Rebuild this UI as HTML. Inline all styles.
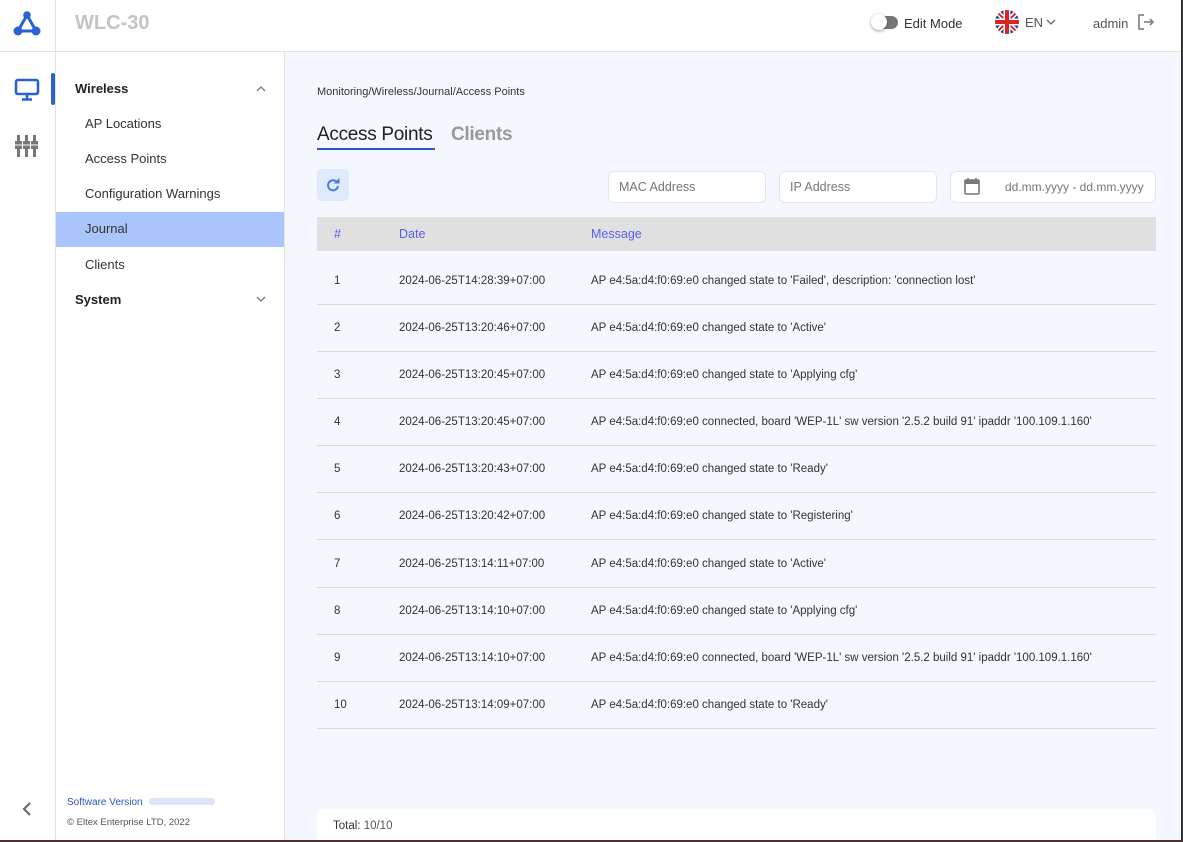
<!DOCTYPE html>
<html><head><meta charset="utf-8"><style>
*{box-sizing:border-box;margin:0;padding:0}
body{width:1183px;height:842px;overflow:hidden;font-family:"Liberation Sans",sans-serif;background:#f4f7fd;position:relative;color:#333}
.hdr{position:absolute;left:0;top:0;width:1183px;height:52px;background:#fff;border-bottom:1px solid #e2e2e2}
.rail{position:absolute;left:0;top:52px;width:56px;height:790px;background:#fff;border-right:1px solid #e2e2e2}
.side{position:absolute;left:56px;top:52px;width:229px;height:790px;background:#fff;border-right:1px solid #e2e2e2}
.abs{position:absolute}
.si{position:absolute;left:29px;font-size:13px;color:#333}
.rows div{position:absolute;height:47px;left:317px;width:839px;border-bottom:1px solid #dcdcdc;font-size:11.5px;color:#333}
.rows span{position:absolute;top:17px}
.inp{position:absolute;top:171px;height:32px;background:#fff;border:1px solid #e3e6ec;border-radius:6px;font-size:12.5px;color:#777;padding:8px 10px}
</style></head><body>
<div class="hdr">
 <svg class="abs" style="left:13px;top:11px" width="28" height="26" viewBox="0 0 28 26"><g stroke="#2a62d6" stroke-width="3" fill="none"><path d="M14 4L5 20M14 4L23 20M5 20H23"/></g><circle cx="14" cy="4" r="3.8" fill="#2a62d6"/><circle cx="5" cy="20" r="4.5" fill="#2a62d6"/><circle cx="23" cy="20" r="4.5" fill="#2a62d6"/></svg>
 <div class="abs" style="left:55px;top:0;width:1px;height:52px;background:#e2e2e2"></div>
 <div class="abs" style="left:75px;top:12px;font-size:20px;font-weight:bold;color:#c4c4c4">WLC-30</div>
 <div class="abs" style="left:872px;top:16px;width:26px;height:13px;border-radius:7px;background:#777"></div>
 <div class="abs" style="left:871px;top:14px;width:16px;height:16px;border-radius:50%;background:#fff;box-shadow:0 1px 3px rgba(0,0,0,.4)"></div>
 <div class="abs" style="left:904px;top:16px;font-size:13px;color:#333">Edit Mode</div>
 <svg class="abs" style="left:995px;top:10px" width="24" height="24" viewBox="0 0 24 24"><defs><clipPath id="c"><circle cx="12" cy="12" r="12"/></clipPath></defs><g clip-path="url(#c)"><rect width="24" height="24" fill="#1e3e8c"/><path d="M0 0L24 24M24 0L0 24" stroke="#fff" stroke-width="5"/><path d="M0 0L24 24M24 0L0 24" stroke="#d22" stroke-width="2"/><path d="M12 0V24M0 12H24" stroke="#fff" stroke-width="7"/><path d="M12 0V24M0 12H24" stroke="#d22" stroke-width="4"/></g></svg>
 <div class="abs" style="left:1025px;top:15px;font-size:13px;color:#555">EN</div>
 <svg class="abs" style="left:1046px;top:19px" width="10" height="7"><path d="M1 1L5 5L9 1" stroke="#666" stroke-width="1.3" fill="none"/></svg>
 <div class="abs" style="left:1093px;top:16px;font-size:13px;color:#555">admin</div>
 <svg class="abs" style="left:1137px;top:13px" width="18" height="18" viewBox="0 0 18 18"><path d="M7 2H2V16H7M7 9H16M13 6L16 9L13 12" stroke="#777" stroke-width="1.5" fill="none"/></svg>
</div>
<div class="rail">
 <div class="abs" style="left:51px;top:21px;width:4px;height:32px;border-radius:2px;background:#2a62d6"></div>
 <svg class="abs" style="left:14px;top:26px" width="26" height="24" viewBox="0 0 26 24"><rect x="2" y="2" width="22" height="14" rx="2" stroke="#2a62d6" stroke-width="2.6" fill="none"/><path d="M13 16V21M8 21.5H18" stroke="#2a62d6" stroke-width="2.6"/></svg>
 <svg class="abs" style="left:14px;top:81px" width="26" height="26" viewBox="0 0 26 26"><g fill="#777"><rect x="3" y="2" width="3" height="22"/><rect x="11" y="2" width="3" height="22"/><rect x="19" y="2" width="3" height="22"/><rect x="1" y="8" width="7" height="8"/><rect x="9" y="8" width="7" height="8"/><rect x="17" y="8" width="7" height="8"/></g><path d="M1 12H24" stroke="#fff" stroke-width="1"/></svg>
 <svg class="abs" style="left:22px;top:750px" width="10" height="14"><path d="M8 1L2 7L8 13" stroke="#666" stroke-width="2" fill="none"/></svg>
</div>
<div class="side">
 <div class="si" style="left:19px;top:29px;font-weight:bold;color:#222">Wireless</div>
 <svg class="abs" style="left:200px;top:33px" width="10" height="7"><path d="M1 6L5 2L9 6" stroke="#777" stroke-width="1.3" fill="none"/></svg>
 <div class="si" style="top:64px">AP Locations</div>
 <div class="si" style="top:99px">Access Points</div>
 <div class="si" style="top:134px">Configuration Warnings</div>
 <div class="abs" style="left:0;top:160px;width:228px;height:35px;background:#a9c5fb"></div>
 <div class="si" style="top:169px">Journal</div>
 <div class="si" style="top:205px">Clients</div>
 <div class="si" style="left:19px;top:240px;font-weight:bold;color:#222">System</div>
 <svg class="abs" style="left:200px;top:244px" width="10" height="7"><path d="M1 1L5 5L9 1" stroke="#777" stroke-width="1.3" fill="none"/></svg>
 <div class="abs" style="left:11px;top:745px;font-size:10px;color:#2a56b8">Software Version <span style="display:inline-block;width:66px;height:7px;background:#dde6f7;border-radius:3px;margin-left:4px"></span></div>
 <div class="abs" style="left:11px;top:765px;font-size:9.5px;color:#555">© Eltex Enterprise LTD, 2022</div>
</div>
<div class="abs" style="left:317px;top:86px;font-size:11px;color:#333">Monitoring/Wireless/Journal/Access Points</div>
<div class="abs" style="left:317px;top:124px;font-size:19px;color:#222;letter-spacing:-0.3px">Access Points</div>
<div class="abs" style="left:317px;top:148px;width:118px;height:2px;background:#2a56c8"></div>
<div class="abs" style="left:451px;top:124px;font-size:19px;color:#999;font-weight:bold;letter-spacing:-0.3px">Clients</div>
<div class="abs" style="left:317px;top:169px;width:32px;height:32px;border-radius:5px;background:#dfeafd"></div>
<svg class="abs" style="left:326px;top:178px" width="14" height="14" viewBox="0 0 14 14"><path d="M11.5 5A5 5 0 1 0 12 8" stroke="#4a7ed8" stroke-width="2" fill="none"/><path d="M9 5H13V1Z" fill="#4a7ed8" stroke="#4a7ed8"/></svg>
<div class="inp" style="left:608px;width:158px">MAC Address</div>
<div class="inp" style="left:779px;width:158px">IP Address</div>
<div class="inp" style="left:950px;width:206px;padding-left:54px;font-size:12px">dd.mm.yyyy - dd.mm.yyyy</div>
<svg class="abs" style="left:964px;top:177px" width="16" height="18" viewBox="0 0 16 18"><rect x="1" y="3" width="14" height="14" rx="1" stroke="#777" stroke-width="1.6" fill="none"/><rect x="1" y="3" width="14" height="4" fill="#777"/><path d="M4 1V4M12 1V4" stroke="#777" stroke-width="1.6"/></svg>
<div class="abs" style="left:317px;top:217px;width:839px;height:34px;background:#e0e0e0;font-size:12.5px;color:#5a60f0">
 <span class="abs" style="left:17px;top:10px">#</span><span class="abs" style="left:82px;top:10px">Date</span><span class="abs" style="left:274px;top:10px">Message</span>
</div>
<div class="rows">
<div style="top:258px"><span style="left:17px">1</span><span style="left:82px">2024-06-25T14:28:39+07:00</span><span style="left:274px">AP e4:5a:d4:f0:69:e0 changed state to 'Failed', description: 'connection lost'</span></div>
<div style="top:305px"><span style="left:17px">2</span><span style="left:82px">2024-06-25T13:20:46+07:00</span><span style="left:274px">AP e4:5a:d4:f0:69:e0 changed state to 'Active'</span></div>
<div style="top:352px"><span style="left:17px">3</span><span style="left:82px">2024-06-25T13:20:45+07:00</span><span style="left:274px">AP e4:5a:d4:f0:69:e0 changed state to 'Applying cfg'</span></div>
<div style="top:399px"><span style="left:17px">4</span><span style="left:82px">2024-06-25T13:20:45+07:00</span><span style="left:274px">AP e4:5a:d4:f0:69:e0 connected, board 'WEP-1L' sw version '2.5.2 build 91' ipaddr '100.109.1.160'</span></div>
<div style="top:446px"><span style="left:17px">5</span><span style="left:82px">2024-06-25T13:20:43+07:00</span><span style="left:274px">AP e4:5a:d4:f0:69:e0 changed state to 'Ready'</span></div>
<div style="top:493px"><span style="left:17px">6</span><span style="left:82px">2024-06-25T13:20:42+07:00</span><span style="left:274px">AP e4:5a:d4:f0:69:e0 changed state to 'Registering'</span></div>
<div style="top:541px"><span style="left:17px">7</span><span style="left:82px">2024-06-25T13:14:11+07:00</span><span style="left:274px">AP e4:5a:d4:f0:69:e0 changed state to 'Active'</span></div>
<div style="top:588px"><span style="left:17px">8</span><span style="left:82px">2024-06-25T13:14:10+07:00</span><span style="left:274px">AP e4:5a:d4:f0:69:e0 changed state to 'Applying cfg'</span></div>
<div style="top:635px"><span style="left:17px">9</span><span style="left:82px">2024-06-25T13:14:10+07:00</span><span style="left:274px">AP e4:5a:d4:f0:69:e0 connected, board 'WEP-1L' sw version '2.5.2 build 91' ipaddr '100.109.1.160'</span></div>
<div style="top:682px"><span style="left:17px">10</span><span style="left:82px">2024-06-25T13:14:09+07:00</span><span style="left:274px">AP e4:5a:d4:f0:69:e0 changed state to 'Ready'</span></div>
</div>
<div class="abs" style="left:317px;top:809px;width:839px;height:33px;background:#fff;border-radius:6px 6px 0 0;font-size:11.5px;color:#333;padding:11px 16px">Total: <span style="color:#555">10/10</span></div>
<div class="abs" style="left:1181px;top:0;width:2px;height:842px;background:#333"></div>
<div class="abs" style="left:0;top:840px;width:1183px;height:2px;background:#4a3030"></div>
</body></html>
